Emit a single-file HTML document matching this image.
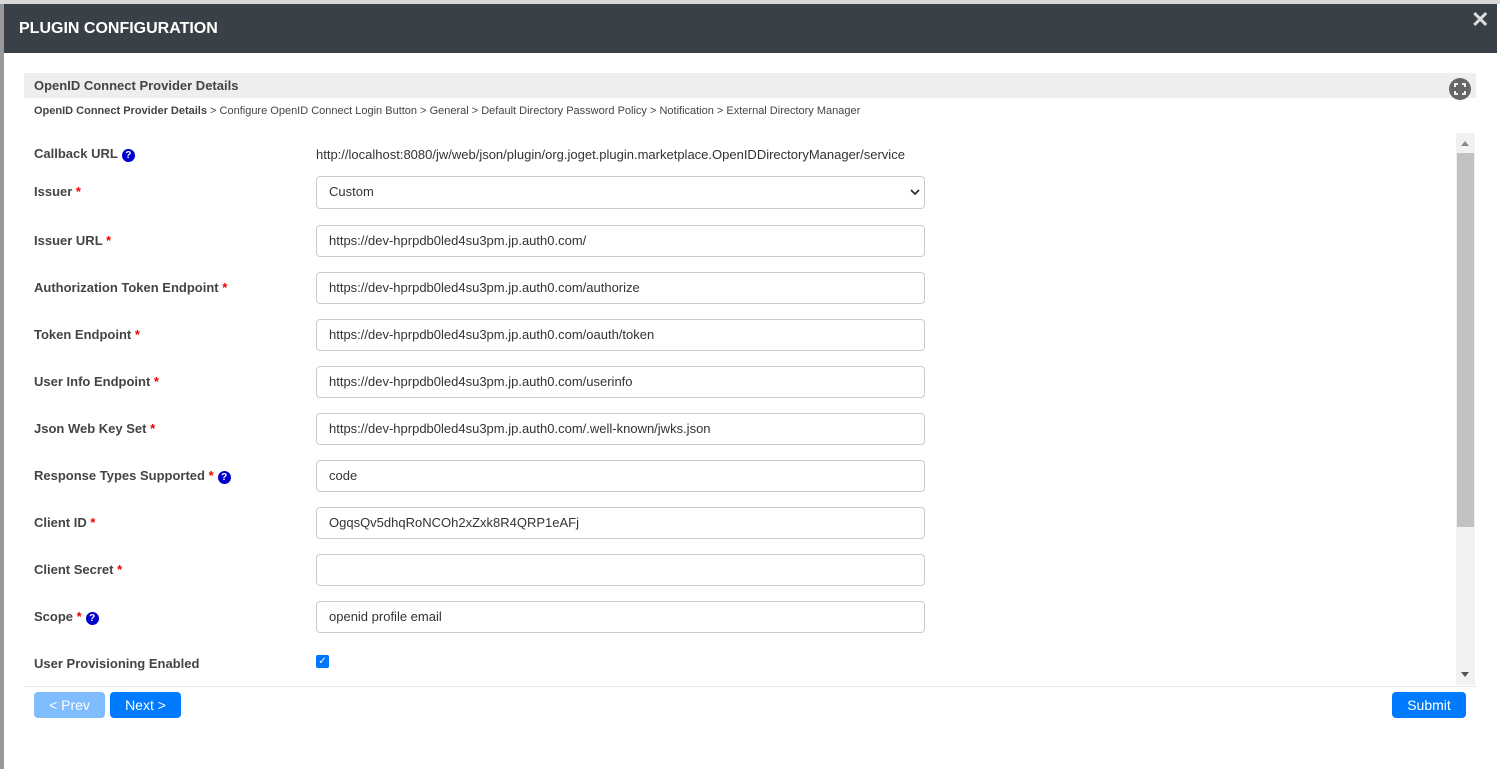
<!DOCTYPE html>
<html><head><style>
body{margin:0;width:1500px;height:769px;background:#fff;font-family:"Liberation Sans",sans-serif;position:relative;overflow:hidden}
.top{position:absolute;left:0;top:0;width:1500px;height:4px;background:#d8d8d8}
.lb{position:absolute;left:0;top:4px;width:4px;height:765px;background:#999}
.hdr{position:absolute;left:4px;top:4px;width:1493px;height:49px;background:#3a4048;color:#fff;font-weight:bold;font-size:16px}
.hdr span{position:absolute;left:15px;top:16px}
.x{position:absolute;left:1471px;top:7px;color:#ddd;font-size:22px;font-weight:bold}
.sec{position:absolute;left:24px;top:73px;width:1452px;height:25px;background:#eee;color:#444;font-weight:bold;font-size:13px}
.sec span{position:absolute;left:10px;top:5px}
.bc{position:absolute;left:34px;top:105px;font-size:11px;color:#444}
.lbl{position:absolute;left:34px;font-size:13px;font-weight:bold;color:#444}
.req{color:#e00}
.q{display:inline-block;width:13px;height:13px;border-radius:50%;background:#00c;color:#fff;font-size:10px;text-align:center;line-height:13px;vertical-align:0px;margin-left:4px}
.inp{position:absolute;left:316px;width:595px;height:30px;border:1px solid #ccc;border-radius:4px;font-size:13px;color:#333;line-height:30px;padding-left:12px}
.sb{position:absolute;left:1456px;top:133px;width:19px;height:552px;background:#f1f1f1}
.th{position:absolute;left:1457px;top:153px;width:17px;height:374px;background:#c1c1c1}
.line{position:absolute;left:24px;top:686px;width:1452px;height:1px;background:#e6e6e6}
.btn{position:absolute;top:692px;height:26px;border-radius:4px;background:#007bff;color:#fff;font-size:14px;text-align:center;line-height:26px}
</style></head><body>
<div class="top"></div><div class="lb"></div>
<div class="hdr"><span>PLUGIN CONFIGURATION</span></div>
<div class="x">✕</div>
<div class="sec"><span>OpenID Connect Provider Details</span></div>
<svg style="position:absolute;left:1449px;top:78px" width="22" height="22" viewBox="0 0 22 22"><circle cx="11" cy="11" r="11" fill="#666"/><path d="M6 9V6h3M13 6h3v3M16 13v3h-3M9 16H6v-3" stroke="#fff" stroke-width="1.8" fill="none"/></svg>
<div class="bc"><b>OpenID Connect Provider Details</b> &gt; Configure OpenID Connect Login Button &gt; General &gt; Default Directory Password Policy &gt; Notification &gt; External Directory Manager</div>

<div class="lbl" style="top:146px">Callback URL<span class="q">?</span></div>
<div style="position:absolute;left:316px;top:147px;font-size:13px;color:#333">http://localhost:8080/jw/web/json/plugin/org.joget.plugin.marketplace.OpenIDDirectoryManager/service</div>
<div class="lbl" style="top:184px">Issuer <span class="req">*</span></div>
<div class="inp" style="top:176px;height:31px">Custom<svg style="position:absolute;right:4px;top:11px" width="10" height="8" viewBox="0 0 10 8"><path d="M1 2l4 4 4-4" stroke="#333" stroke-width="1.8" fill="none"/></svg></div>
<div class="lbl" style="top:233px">Issuer URL <span class="req">*</span></div>
<div class="inp" style="top:225px">https://dev-hprpdb0led4su3pm.jp.auth0.com/</div>
<div class="lbl" style="top:280px">Authorization Token Endpoint <span class="req">*</span></div>
<div class="inp" style="top:272px">https://dev-hprpdb0led4su3pm.jp.auth0.com/authorize</div>
<div class="lbl" style="top:327px">Token Endpoint <span class="req">*</span></div>
<div class="inp" style="top:319px">https://dev-hprpdb0led4su3pm.jp.auth0.com/oauth/token</div>
<div class="lbl" style="top:374px">User Info Endpoint <span class="req">*</span></div>
<div class="inp" style="top:366px">https://dev-hprpdb0led4su3pm.jp.auth0.com/userinfo</div>
<div class="lbl" style="top:421px">Json Web Key Set <span class="req">*</span></div>
<div class="inp" style="top:413px">https://dev-hprpdb0led4su3pm.jp.auth0.com/.well-known/jwks.json</div>
<div class="lbl" style="top:468px">Response Types Supported <span class="req">*</span><span class="q">?</span></div>
<div class="inp" style="top:460px">code</div>
<div class="lbl" style="top:515px">Client ID <span class="req">*</span></div>
<div class="inp" style="top:507px">OgqsQv5dhqRoNCOh2xZxk8R4QRP1eAFj</div>
<div class="lbl" style="top:562px">Client Secret <span class="req">*</span></div>
<div class="inp" style="top:554px"></div>
<div class="lbl" style="top:609px">Scope <span class="req">*</span><span class="q">?</span></div>
<div class="inp" style="top:601px">openid profile email</div>
<div class="lbl" style="top:656px">User Provisioning Enabled</div>
<div style="position:absolute;left:316px;top:655px;width:13px;height:13px;border-radius:2px;background:#0075ff;color:#fff;font-size:10px;text-align:center;line-height:13px">✓</div>

<div class="sb"></div><div class="th"></div>
<div style="position:absolute;left:1461px;top:141px;border:4px solid transparent;border-bottom:5px solid #888;border-top:0;width:0"></div>
<div style="position:absolute;left:1461px;top:672px;border:4px solid transparent;border-top:5px solid #555;border-bottom:0;width:0"></div>
<div class="line"></div>
<div class="btn" style="left:34px;width:71px;background:#80bdff">&lt; Prev</div>
<div class="btn" style="left:110px;width:71px">Next &gt;</div>
<div class="btn" style="left:1392px;width:74px">Submit</div>
</body></html>
